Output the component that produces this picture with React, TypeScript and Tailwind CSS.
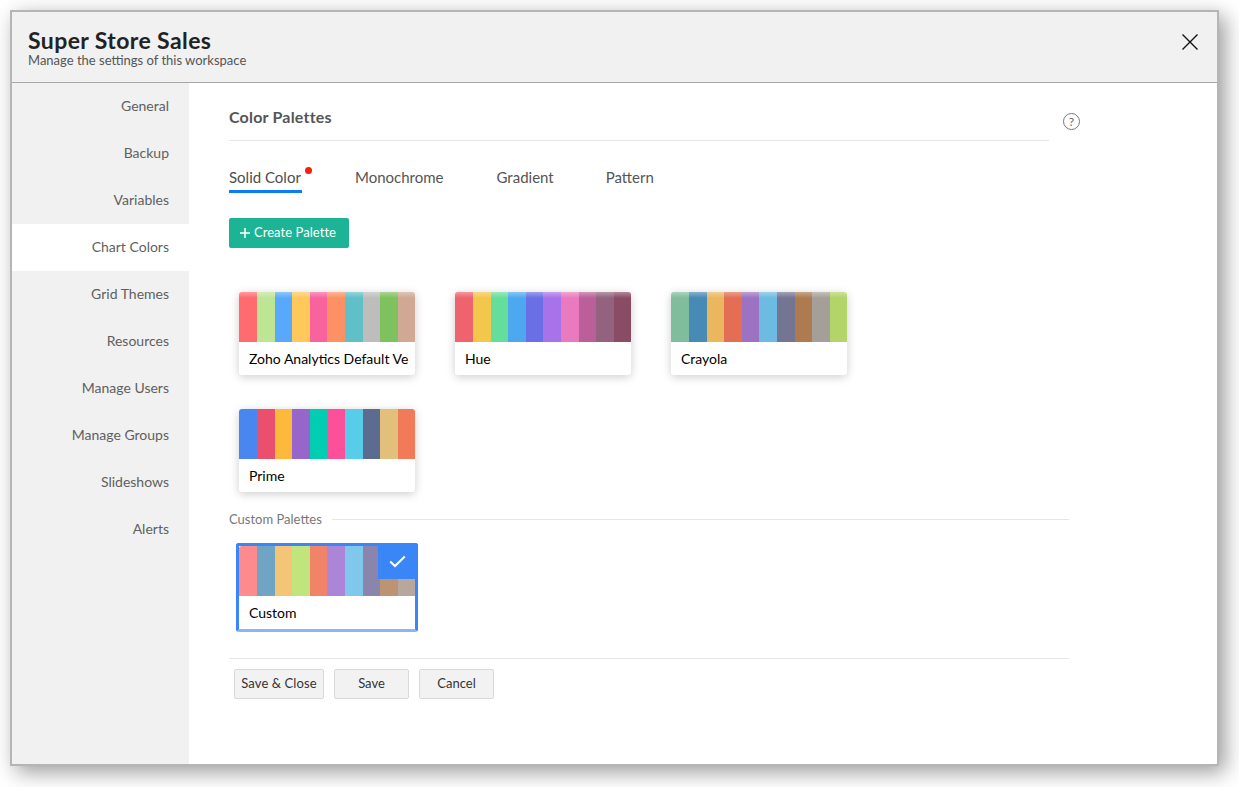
import React from "react";

const nav = ["General", "Backup", "Variables", "Chart Colors", "Grid Themes", "Resources", "Manage Users", "Manage Groups", "Slideshows", "Alerts"];
const widths = ["w-[18px]", "w-[18px]", "w-[17px]", "w-[18px]", "w-[17px]", "w-[18px]", "w-[18px]", "w-[17px]", "w-[18px]", "w-[17px]"];

function Stripes({ colors, sheen }: { colors: string[]; sheen?: boolean }) {
  return (
    <div className="relative flex h-[50px] overflow-hidden rounded-t-[3px]">
      {colors.map((c, i) => (
        <div key={i} className={widths[i]} style={{ background: c }} />
      ))}
      {sheen && <div className="absolute inset-x-0 top-0 h-[6px] bg-gradient-to-b from-[#ffffff55] to-transparent" />}
    </div>
  );
}

function Card({ name, colors, sheen }: { name: string; colors: string[]; sheen?: boolean }) {
  return (
    <div className="w-[176px] h-[83px] rounded-[3px] bg-white shadow-[0_2px_10px_rgba(0,0,0,0.2)]">
      <Stripes colors={colors} sheen={sheen} />
      <div className="h-[33px] pl-[10px] pt-[8px] text-[14px] leading-[18px] text-black whitespace-nowrap overflow-hidden">{name}</div>
    </div>
  );
}

export default function App() {
  return (
    <div className="w-[1239px] h-[787px] bg-white pt-[10px] pl-[10px] overflow-hidden font-['Lato','Liberation_Sans',sans-serif]">
      <div className="relative w-[1209px] h-[756px] border-2 border-[#b5b5b5] flex flex-col bg-white shadow-[6px_6px_20px_rgba(0,0,0,0.4)]">
        <header className="h-[71px] shrink-0 bg-[#f1f1f1] border-b border-[#a8a8a8] pl-[16px] pr-[18px] flex items-center justify-between">
          <div className="pt-[2px]">
            <h1 className="text-[23px] leading-[22px] font-bold tracking-[0.4px] text-[#222222]">Super Store Sales</h1>
            <p className="mt-[2px] text-[13px] leading-[14px] text-[#555555]">Manage the settings of this workspace</p>
          </div>
          <svg width="18" height="18" viewBox="0 0 18 18" fill="none" stroke="#111111" strokeWidth="1.4" className="mb-[10px]">
            <path d="M1.5 1.5 16.5 16.5M16.5 1.5 1.5 16.5" />
          </svg>
        </header>
        <div className="flex flex-1 min-h-0">
          <nav className="w-[177px] shrink-0 bg-[#f1f1f1]">
            {nav.map((n) => (
              <div
                key={n}
                className={`h-[47px] flex items-center justify-end pr-[20px] pb-[2px] text-[14px] text-[#5f5f5f] ${n === "Chart Colors" ? "bg-white" : ""}`}
              >
                {n}
              </div>
            ))}
          </nav>
          <main className="flex-1 pl-[40px] pr-[148px]">
            <div className="flex items-start">
              <div className="w-[820px] shrink-0 h-[58px] border-b border-[#e6e6e6] pt-[24px] text-[16px] leading-[20px] font-bold tracking-[0.2px] text-[#555555]">Color Palettes</div>
              <div className="ml-[14px] mt-[30px] w-[17px] h-[17px] rounded-full border border-[#777777] flex items-center justify-center text-[12px] leading-none text-[#666666]">?</div>
            </div>
            <div className="flex mt-[26px] text-[15px] leading-[20px] text-[#555555] h-[26px]">
              <div className="relative w-[73px] h-[26px] border-b-[3px] border-[#0a7cf5] text-[#4d4d4d] whitespace-nowrap">
                Solid Color
                <span className="absolute -right-[10px] top-0 w-[7px] h-[7px] rounded-full bg-[#f5200d]" />
              </div>
              <div className="ml-[53px]">Monochrome</div>
              <div className="ml-[53px]">Gradient</div>
              <div className="ml-[52px]">Pattern</div>
            </div>
            <button className="mt-[25px] w-[120px] h-[30px] rounded-[2px] bg-[#1cb495] text-white text-[13px] tracking-[0.05px] flex items-center justify-start pl-[11px] gap-[4px]">
              <svg width="10" height="10" viewBox="0 0 10 10" stroke="#ffffff" strokeWidth="1.5"><path d="M5 0v10M0 5h10" /></svg>
              Create Palette
            </button>
            <div className="mt-[44px] pl-[10px] flex flex-wrap gap-x-[40px] gap-y-[34px] w-[700px]">
              <Card name="Zoho Analytics Default Ve" sheen colors={["#ff6b6e", "#bde594", "#58a9fc", "#fec85a", "#f8639e", "#fd9165", "#5fc0c8", "#bdbdbd", "#7fc05f", "#d0a894"]} />
              <Card name="Hue" sheen colors={["#ef636e", "#f3c74c", "#65de9b", "#4ea8f0", "#6a6fe5", "#a872ea", "#ea7abf", "#bb5f9a", "#93627e", "#8a4c65"]} />
              <Card name="Crayola" sheen colors={["#7fbd9d", "#478ab6", "#eab75f", "#e46e53", "#9d72c2", "#6dbbe2", "#747592", "#ae7b50", "#a59f99", "#b2d468"]} />
              <Card name="Prime" colors={["#4a86f0", "#ea4f6e", "#fdb93c", "#9865ca", "#00cdb1", "#fc519a", "#58cde9", "#5b6c90", "#e2bf7a", "#f17a58"]} />
            </div>
            <div className="mt-[19px] mr-[11px] flex items-center gap-[10px] text-[13px] leading-[16px] text-[#777777]">
              <span>Custom Palettes</span>
              <div className="flex-1 h-px bg-[#e6e6e6]" />
            </div>
            <div className="relative mt-[16px] ml-[7px] w-[182px] h-[89px] rounded-[3px] border-[3px] border-[#3b86f7] border-b-[#8ab5f9] bg-white">
              <Stripes colors={["#fd8a8d", "#6fa4c5", "#f4c577", "#c2e47d", "#f18468", "#ac85d8", "#7fc8ec", "#8985ad", "#bd9473", "#b9a79d"]} />
              <div className="pl-[10px] pt-[8px] text-[14px] leading-[18px] text-black">Custom</div>
              <div className="absolute -right-[3px] -top-[3px] w-[40px] h-[36px] bg-[#3b86f7] rounded-tr-[3px] flex items-center justify-center pr-[1px]">
                <svg width="17" height="13" viewBox="0 0 17 13" fill="none" stroke="#ffffff" strokeWidth="2"><path d="M1.2 6.5 6 11 15.8 1.5" /></svg>
              </div>
            </div>
            <div className="mt-[26px] mr-[11px] border-t border-[#e6e6e6] pt-[10px] pl-[5px] flex gap-[10px] text-[13px] text-[#333333]">
              <button className="w-[90px] h-[30px] rounded-[2px] border border-[#d9d9d9] bg-[#f2f2f2] tracking-[0.1px]">Save &amp; Close</button>
              <button className="w-[75px] h-[30px] rounded-[2px] border border-[#d9d9d9] bg-[#f2f2f2]">Save</button>
              <button className="w-[75px] h-[30px] rounded-[2px] border border-[#d9d9d9] bg-[#f2f2f2]">Cancel</button>
            </div>
          </main>
        </div>
      </div>
    </div>
  );
}
